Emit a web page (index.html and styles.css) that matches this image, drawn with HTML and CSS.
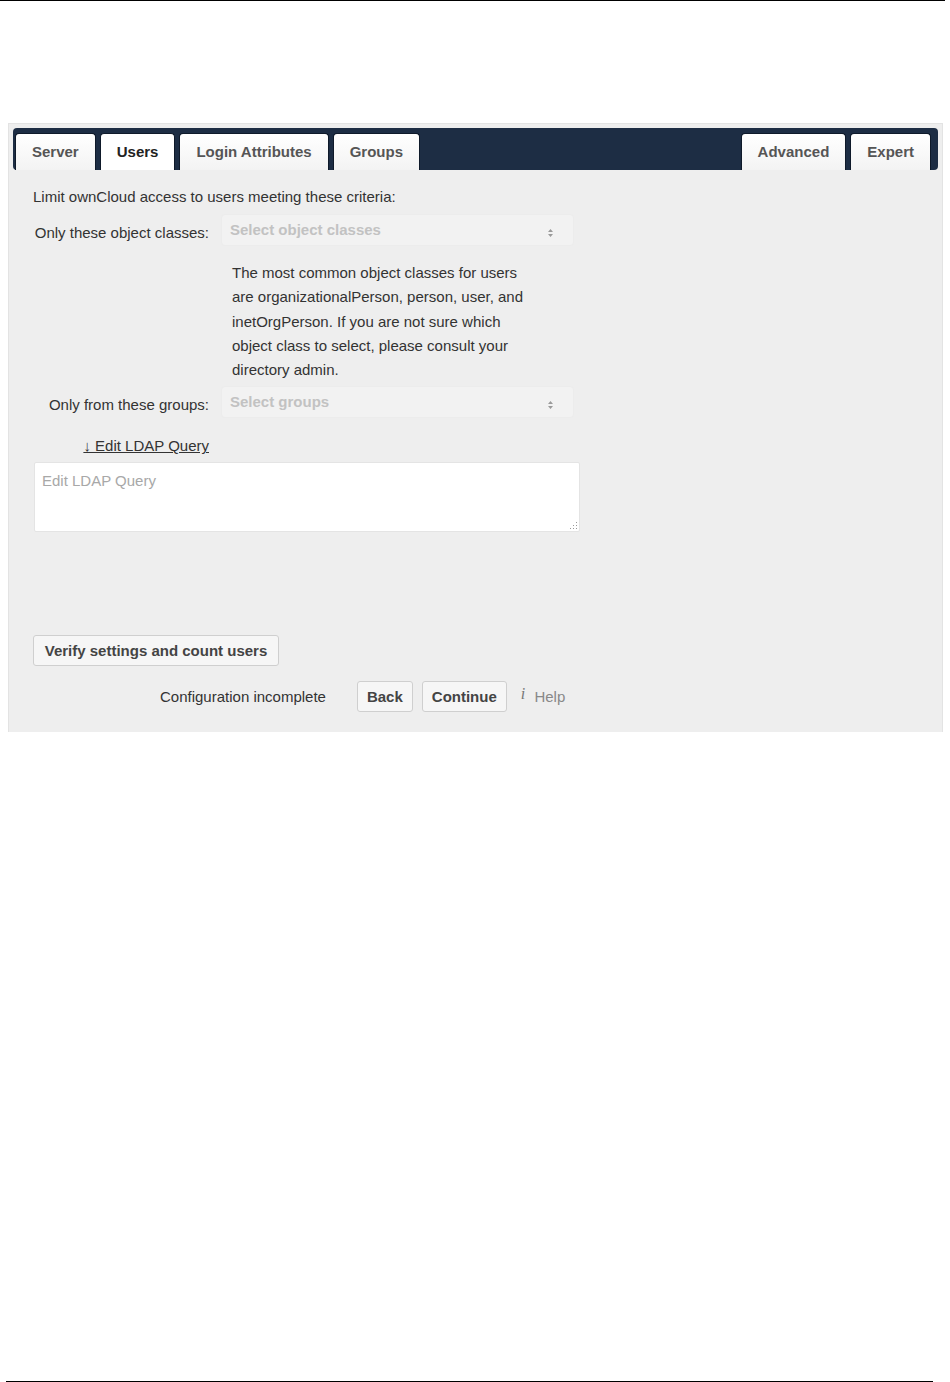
FILE: index.html
```html
<!DOCTYPE html>
<html>
<head>
<title>LDAP wizard - Users</title>
<link rel="stylesheet" href="styles.css">
</head>
<body>

<div class='sheet'>
    <div class='rule'></div>

    <div class='panel'>
        <div class='tabbar'>
            <ul class='tabs'>
                <li class='tab'>Server</li>
                <li class='tab active'>Users</li>
                <li class='tab'>Login Attributes</li>
                <li class='tab'>Groups</li>
            </ul>
            <ul class='tabs'>
                <li class='tab'>Advanced</li>
                <li class='tab'>Expert</li>
            </ul>
        </div>

        <div class='content'>
            <p class='intro'>Limit ownCloud access to users meeting these criteria:</p>

            <div class='row'>
                <label class='label'>Only these object classes:</label>
                <div class='select'>
                    <span>Select object classes</span>
                    <svg class='arrows' width='5' height='8' viewBox='0 0 5 8'>
                        <path d='M0 3 L2.5 0 L5 3 Z M0 5 L5 5 L2.5 8 Z' fill='#9a9a9a'/>
                    </svg>
                </div>
            </div>

            <p class='hint'>The most common object classes for users are organizationalPerson, person, user, and inetOrgPerson. If you are not sure which object class to select, please consult your directory admin.</p>

            <div class='row row-groups'>
                <label class='label'>Only from these groups:</label>
                <div class='select'>
                    <span>Select groups</span>
                    <svg class='arrows' width='5' height='8' viewBox='0 0 5 8'>
                        <path d='M0 3 L2.5 0 L5 3 Z M0 5 L5 5 L2.5 8 Z' fill='#9a9a9a'/>
                    </svg>
                </div>
            </div>

            <div class='row row-link'>
                <a class='label toggle'>&darr; Edit LDAP Query</a>
            </div>

            <div class='query'>
                <span class='placeholder'>Edit LDAP Query</span>
                <svg class='grip' width='10' height='10' viewBox='0 0 10 10'>
                    <rect x='8' y='2' width='1' height='1' fill='#999'/>
                    <rect x='8' y='5' width='1' height='1' fill='#999'/>
                    <rect x='5' y='5' width='1' height='1' fill='#999'/>
                    <rect x='8' y='8' width='1' height='1' fill='#999'/>
                    <rect x='5' y='8' width='1' height='1' fill='#999'/>
                    <rect x='2' y='8' width='1' height='1' fill='#999'/>
                </svg>
            </div>

            <button class='btn verify'>Verify settings and count users</button>

            <div class='footer'>
                <span class='status'>Configuration incomplete</span>
                <button class='btn'>Back</button>
                <button class='btn'>Continue</button>
                <a class='help'><i>i</i> Help</a>
            </div>
        </div>
    </div>

    <div class='spacer'></div>
    <div class='rule rule-bottom'></div>
</div>

</body>
</html>
```

FILE: styles.css
```css
html, body {
    margin: 0px;
    background: #fff;
}

body {
    font-family: "Liberation Sans", Arial, sans-serif;
    font-size: 15px;
    color: #333;
}

.sheet {
    height: 1382px;
    display: flex;
    flex-direction: column;
}

.rule {
    height: 0px;
    border-top: 1px solid #000;
    margin: 0px 5px 0px 0px;
}
.rule-bottom {
    margin: 0px 17px 0px 6px;
}

.spacer {
    flex: 1;
}

/* the settings box */

.panel {
    box-sizing: border-box;
    margin: 122px 0px 0px 8px;
    width: 935px;
    height: 609px;
    padding: 4px;
    background: #eee;
    border: 1px solid #e3e3e3;
    border-bottom: none;
}

.tabbar {
    display: flex;
    justify-content: space-between;
    height: 42px;
    padding: 5px 7px 0px 2px;
    box-sizing: border-box;
    background: #1d2d44;
    border-radius: 4px;
}

.tabs {
    display: flex;
    gap: 4px;
    margin: 0px;
    padding: 0px;
    list-style: none;
}

.tab {
    box-sizing: border-box;
    height: 37px;
    line-height: 36px;
    padding: 0px 16px;
    font-weight: bold;
    font-size: 15px;
    color: #555;
    background: linear-gradient(#fff, #f3f3f3);
    border: 1px solid #0f1a2a;
    border-bottom: none;
    border-radius: 4px 4px 0px 0px;
}
.tab.active {
    color: #222;
    background: #fff;
}

/* form */

.content {
    padding: 17px 0px 0px 20px;
}

.intro {
    margin: 0px;
    line-height: 20px;
}

.row {
    display: flex;
    align-items: center;
    gap: 12px;
    margin-top: 7px;
}

.label {
    width: 176px;
    text-align: right;
    flex: none;
    padding-top: 4px;
}

.select {
    box-sizing: border-box;
    width: 353px;
    height: 32px;
    display: flex;
    align-items: center;
    justify-content: space-between;
    padding: 0px 20px 0px 8px;
    background: #f2f2f2;
    border: 1px solid #ececec;
    border-radius: 4px;
    color: #c2c2c2;
    font-weight: bold;
}
.select span {
    margin-top: -2px;
}

.arrows {
    margin-top: 6px;
}

.hint {
    margin: 15px 0px 0px 199px;
    width: 300px;
    line-height: 24.3px;
}

.row-groups {
    margin-top: 4px;
}

.row-link {
    margin-top: 19px;
}

.toggle {
    padding-top: 0px;
    color: #333;
    text-decoration: underline;
}

.query {
    position: relative;
    box-sizing: border-box;
    margin: 8px 0px 0px 1px;
    width: 546px;
    height: 70px;
    padding: 9px 7px;
    background: #fff;
    border: 1px solid #e4e4e4;
    border-radius: 2px;
    color: #a8a8a8;
}

.grip {
    position: absolute;
    right: 1px;
    bottom: 1px;
}

.btn {
    box-sizing: border-box;
    height: 31px;
    padding: 0px 9px;
    font-family: inherit;
    font-size: 15px;
    font-weight: bold;
    color: #444;
    background: #f6f6f6;
    border: 1px solid #cfcfcf;
    border-radius: 3px;
}

.verify {
    display: block;
    margin-top: 103px;
    width: 246px;
}

.footer {
    display: flex;
    align-items: center;
    margin: 15px 0px 0px 127px;
}

.footer .btn {
    margin-right: 9px;
}

.status {
    margin-right: 31px;
}

.help {
    margin-left: 5px;
    color: #888;
}
.help i {
    font-family: "Liberation Serif", serif;
    font-size: 16px;
    color: #777;
    margin-right: 5px;
    position: relative;
    top: -3px;
}
```
